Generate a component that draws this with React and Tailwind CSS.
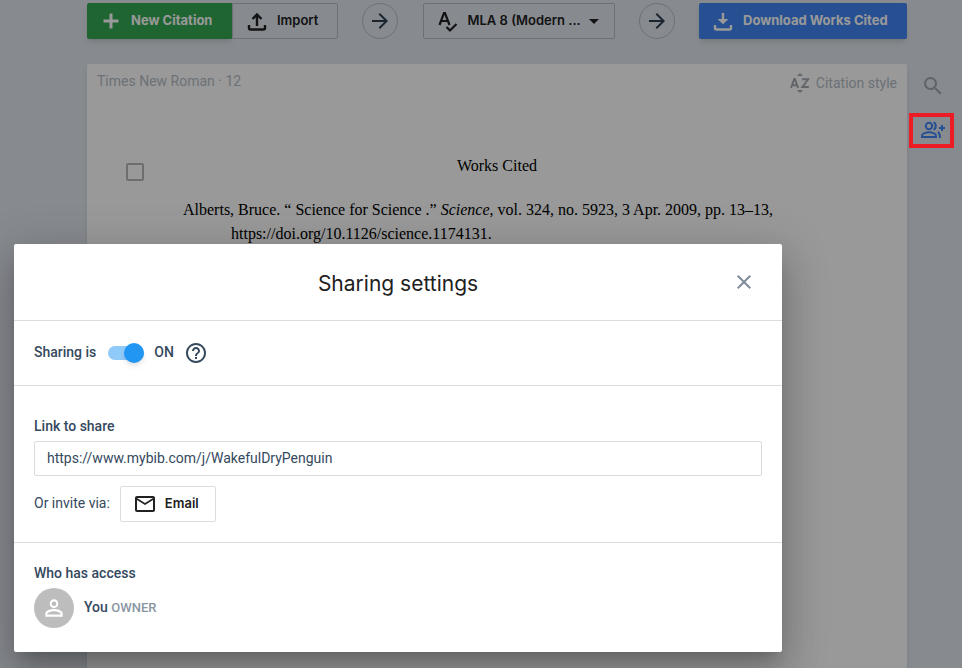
import React, { useState } from 'react';
import {
  MdArrowDropDown,
  MdArrowForward,
  MdClose,
  MdHelpOutline,
  MdMailOutline,
  MdPersonOutline,
  MdSearch
} from 'react-icons/md';

const PlusIcon = () => (
  <svg viewBox="0 0 24 24" className="h-6 w-6 shrink-0 fill-none stroke-current" strokeWidth="3">
    <path d="M12 4.5v15M4.5 12h15" />
  </svg>
);

const ImportIcon = () => (
  <svg viewBox="0 0 24 24" className="h-6 w-6 shrink-0 fill-none stroke-current" strokeWidth="2.4">
    <path d="M4 16v3a1.5 1.5 0 0 0 1.5 1.5h13a1.5 1.5 0 0 0 1.5-1.5v-3M12 17V6M7.5 10L12 5.5l4.5 4.5" />
  </svg>
);

const DownloadIcon = () => (
  <svg viewBox="0 0 24 24" className="h-6 w-6 shrink-0 fill-none stroke-current" strokeWidth="2.4">
    <path d="M4 16v3a1.5 1.5 0 0 0 1.5 1.5h13a1.5 1.5 0 0 0 1.5-1.5v-3M12 4v9" />
    <path d="M8 10.5h8l-4 4z" fill="currentColor" strokeWidth="1.2" />
  </svg>
);

const StyleIcon = () => (
  <svg viewBox="0 0 24 24" className="h-6 w-6 shrink-0 fill-none stroke-current" strokeWidth="2.2">
    <path d="M3.5 16L8 4h1l4.5 12M5 12h7M10.5 18l3.5 3.5 6.5-6.5" />
  </svg>
);

const SortIcon = () => (
  <svg viewBox="0 0 20 20" className="h-5 w-5 shrink-0 fill-none stroke-current" strokeWidth="1.9">
    <path d="M1 15l3.3-9h.6l3.3 9M2.2 12.3h5M12 6.2h6.2L12.4 14h6.4" />
    <path d="M7 3l3-3 3 3zM7 17h6l-3 3z" fill="currentColor" stroke="none" />
  </svg>
);

const GroupAddIcon = () => (
  <svg viewBox="0 0 24 24" className="h-6 w-6 shrink-0 overflow-visible fill-none stroke-current" strokeWidth="2">
    <circle cx="8" cy="8" r="3.2" />
    <path d="M1 19v-1.2c0-2.2 4.2-3.6 7-3.6s7 1.4 7 3.6V19z" />
    <path d="M12.6 4.4c2.8.6 2.8 6.6 0 7.2M16.8 14c1.9 1 2.2 2.4 2.2 6M21 7v6M18 10h6" />
  </svg>
);

const StepArrow = ({ label }) => (
  <button
    type="button"
    aria-label={label}
    className="flex h-9 w-9 items-center justify-center rounded-full border border-[#b4bdc6] text-[#2c3e50]"
  >
    <MdArrowForward className="h-6 w-6" />
  </button>
);

const Toolbar = () => (
  <div className="flex items-center justify-between font-[Inter,sans-serif] text-[13px] font-semibold">
    <div className="flex">
      <button
        type="button"
        className="flex h-9 w-[145px] items-center gap-2 rounded-l-xs bg-[#34a853] pl-3 font-bold text-white shadow-md"
      >
        <PlusIcon />
        New Citation
      </button>
      <button
        type="button"
        className="flex h-9 w-[106px] items-center gap-2 rounded-r-xs border border-[#b4bdc6] pl-3 text-[#212121]"
      >
        <ImportIcon />
        Import
      </button>
    </div>

    <StepArrow label="Choose style" />

    <label className="relative flex h-9 w-48 items-center rounded-xs border border-[#b4bdc6] pl-3 text-[#212121]">
      <StyleIcon />
      <select
        aria-label="Citation style"
        className="h-full min-w-0 flex-1 appearance-none bg-transparent pl-2 outline-none"
      >
        <option>MLA 8 (Modern ...</option>
      </select>
      <MdArrowDropDown className="pointer-events-none absolute right-2 h-6 w-6" />
    </label>

    <StepArrow label="Download" />

    <button
      type="button"
      className="flex h-9 w-52 items-center gap-2 rounded-xs bg-[#4285f4] pl-3 font-bold text-white shadow-md"
    >
      <DownloadIcon />
      Download Works Cited
    </button>
  </div>
);

const Paper = () => (
  <div className="mt-[25px] flex-1 rounded-t-xs bg-white shadow-md">
    <div className="flex h-10 items-start justify-between px-[10px] pt-[7px] text-[14px] text-[#b4bdc6]">
      <span className="leading-5">Times New Roman · 12</span>
      <button type="button" className="flex h-6 items-center gap-[6px]">
        <span className="text-[#a0a8b0]">
          <SortIcon />
        </span>
        Citation style
      </button>
    </div>

    <div className="mt-[50px] flex font-['Liberation_Serif',serif] text-[16px] leading-6 text-black">
      <input
        type="checkbox"
        aria-label="Select all citations"
        className="mt-[9px] ml-[39px] h-[18px] w-[18px] shrink-0 appearance-none rounded-xs border-2 border-[#b8b8b8]"
      />
      <div className="mr-24 ml-[39px] flex-1">
        <h2 className="text-center">Works Cited</h2>
        <p className="mt-5 pl-12 -indent-12">
          Alberts, Bruce. “ Science for Science .” <i>Science</i>, vol. 324, no. 5923, 3 Apr. 2009, pp. 13–13,{' '}
          <span>https://doi.org/10.1126/science.1174131.</span>
        </p>
      </div>
    </div>
  </div>
);

const SharingDialog = () => {
  const [sharing, setSharing] = useState(true);

  return (
    <div
      role="dialog"
      aria-labelledby="sharing-title"
      className="w-full rounded-xs bg-white text-[14px] text-[#34495e] shadow-[0_11px_15px_-7px_rgba(0,0,0,0.2),0_24px_38px_3px_rgba(0,0,0,0.14),0_9px_46px_8px_rgba(0,0,0,0.12)]"
    >
      <header className="relative flex h-[77px] items-center justify-center border-b border-[#dcdcdc]">
        <h1 id="sharing-title" className="pt-1 font-[Inter,sans-serif] text-[21px] text-[#212121]">
          Sharing settings
        </h1>
        <button type="button" aria-label="Close" className="absolute right-[26px] text-[#7f8c9a]">
          <MdClose className="h-6 w-6" />
        </button>
      </header>

      <section className="flex h-[65px] items-center border-b border-[#dcdcdc] px-5 font-medium">
        <label htmlFor="sharing" className="pb-[2px]">
          Sharing is
        </label>
        <span className="relative mr-[10px] ml-3 flex h-5 w-9 items-center">
          <input
            id="sharing"
            type="checkbox"
            checked={sharing}
            onChange={(e) => setSharing(e.target.checked)}
            className="peer h-[14px] w-full appearance-none rounded-full bg-gray-300 checked:bg-[#90caf9]"
          />
          <span className="pointer-events-none absolute left-0 h-5 w-5 rounded-full bg-white shadow-md peer-checked:left-4 peer-checked:bg-[#2196f3]"></span>
        </span>
        <span className="pb-[2px]">{sharing ? 'ON' : 'OFF'}</span>
        <button type="button" aria-label="Help" className="ml-[10px]">
          <MdHelpOutline className="h-6 w-6" />
        </button>
      </section>

      <section className="border-b border-[#dcdcdc] px-5 pt-[30px] pb-5">
        <label htmlFor="share-link" className="block leading-5 font-medium">
          Link to share
        </label>
        <input
          id="share-link"
          type="text"
          readOnly
          value="https://www.mybib.com/j/WakefulDryPenguin"
          className="mt-[5px] h-[35px] w-full rounded-xs border border-[#d8dce0] px-3 pb-[2px] outline-none"
        />
        <div className="mt-[10px] flex items-center gap-[10px]">
          <span className="pb-[2px]">Or invite via:</span>
          <button
            type="button"
            className="flex h-9 items-center gap-2 rounded-xs border border-[#dcdcdc] pr-4 pl-3 font-[Inter,sans-serif] text-[13px] font-semibold text-[#212121]"
          >
            <MdMailOutline className="h-6 w-6" />
            Email
          </button>
        </div>
      </section>

      <section className="px-5 pt-5 pb-6">
        <h2 className="leading-5 font-medium">Who has access</h2>
        <div className="mt-[5px] flex items-center gap-[10px]">
          <span className="flex h-10 w-10 items-center justify-center rounded-full bg-[#bdbdbd] text-white">
            <MdPersonOutline className="h-[26px] w-[26px]" />
          </span>
          <p className="pb-[2px] font-medium">
            You <span className="text-[13px] text-[#8a96a3]">OWNER</span>
          </p>
        </div>
      </section>
    </div>
  );
};

const App = () => (
  <div className="relative flex min-h-screen bg-[#e1e7ee] pl-[87px] font-[Roboto,sans-serif]">
    <main className="flex min-w-0 flex-1 flex-col pt-[3px]">
      <Toolbar />
      <Paper />
    </main>

    <aside className="flex w-[55px] flex-col items-center pt-[74px]">
      <button type="button" aria-label="Search" className="mr-1 text-[#9aa5b1]">
        <MdSearch className="h-6 w-6" />
      </button>
      <button type="button" aria-label="Sharing settings" className="relative mt-5 mr-1 text-[#4285f4]">
        <GroupAddIcon />
        <span className="absolute -top-[5px] -right-[9px] -bottom-[6px] -left-3 z-20 border-4 border-[#ed1c24]"></span>
      </button>
    </aside>

    {/* Затемнение и окно настроек */}
    <div className="absolute inset-0 z-10 flex items-start overflow-hidden bg-black/40 pt-[244px] pr-[180px] pb-4 pl-[14px]">
      <SharingDialog />
    </div>
  </div>
);

export default App;
